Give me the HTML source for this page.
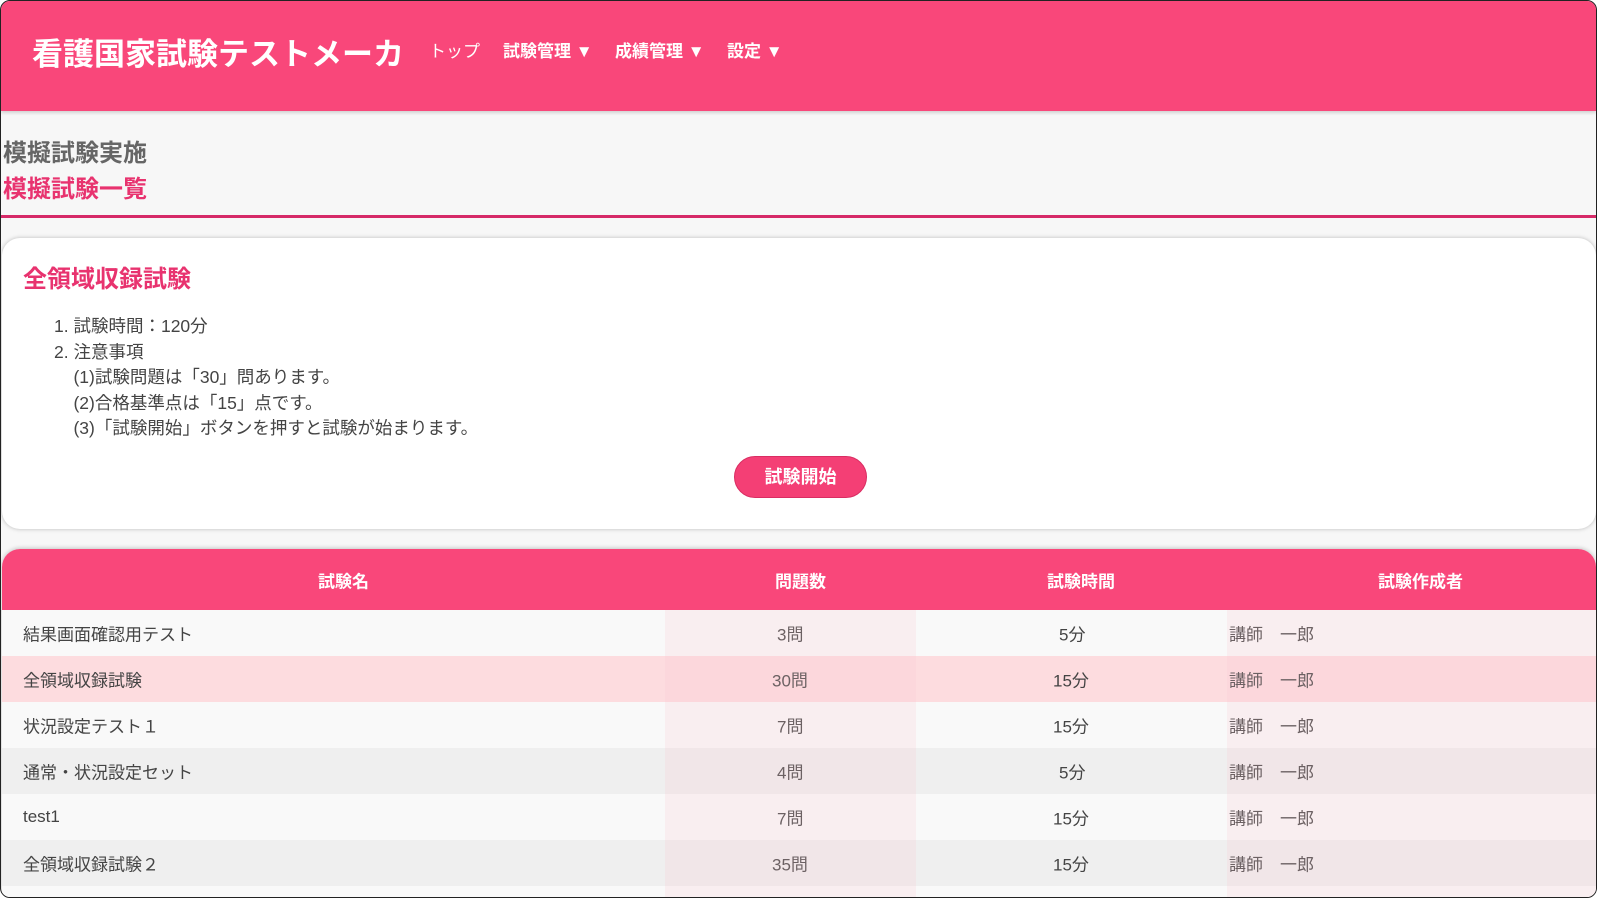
<!DOCTYPE html>
<html><head><meta charset="utf-8"><style>
*{margin:0;padding:0;box-sizing:border-box}
body{width:1598px;height:898px;background:#fff;font-family:"Liberation Sans","Noto Sans CJK JP",sans-serif;overflow:hidden;position:relative}
.frame{position:absolute;left:0;top:0;width:1597px;height:898px;border:1.5px solid #222;border-radius:10px;overflow:hidden;background:#f7f7f7}
.hdr{position:absolute;left:0;top:0;width:100%;height:110px;background:#f9477a;box-shadow:0 2px 3px rgba(0,0,0,.15)}
.logo{position:absolute;left:31px;top:28px;font-size:31px;font-weight:bold;color:#fff}
.nav{position:absolute;top:36px;font-size:17px;color:#fff;font-weight:bold}
.h1{position:absolute;left:2px;top:132px;font-size:24px;font-weight:bold;color:#666}
.h2{position:absolute;left:2px;top:168px;font-size:24px;font-weight:bold;color:#e8336f}
.line{position:absolute;left:0;top:214px;width:100%;height:3px;background:#d62a68}
.card{position:absolute;left:1px;top:237px;width:1594px;height:291px;background:#fff;border-radius:18px;box-shadow:0 0 4px rgba(0,0,0,.25)}
.ct{position:absolute;left:21px;top:21px;font-size:24px;font-weight:bold;color:#e8336f}
.list{position:absolute;left:52px;top:76px;font-size:17.5px;color:#444;line-height:25.5px}
.btn{position:absolute;left:732px;top:218px;width:133px;height:42px;border-radius:21px;background:#f43f75;color:#fff;font-size:18px;font-weight:bold;text-align:center;line-height:40px;border:1px solid #d92d62}
.tbl{position:absolute;left:1px;top:548px;width:1594px;height:360px;border-radius:18px 18px 0 0;overflow:hidden;box-shadow:0 -1px 4px rgba(0,0,0,.2)}
.th{height:61px;background:#f9477a;position:relative;color:#fff;font-weight:bold;font-size:17px}
.th span,.tr span{position:absolute;top:50%;transform:translateY(-50%)}
.tr{height:46px;position:relative;font-size:17px;color:#444}
.o{background:#f9f9f9}.e{background:#efefef}.hl{background:#fddcdf}
.tint{position:absolute;top:0;bottom:0;background:rgba(250,200,210,.22)}
</style></head><body>
<div class="frame">
<div class="hdr">
<div class="logo">看護国家試験テストメーカ</div>
<div class="nav" style="left:428px;font-weight:normal">トップ</div>
<div class="nav" style="left:502px">試験管理 ▼</div>
<div class="nav" style="left:614px">成績管理 ▼</div>
<div class="nav" style="left:726px">設定 ▼</div>
</div>
<div class="h1">模擬試験実施</div>
<div class="h2">模擬試験一覧</div>
<div class="line"></div>
<div class="card">
<div class="ct">全領域収録試験</div>
<div class="list">1. 試験時間：120分<br>2. 注意事項<br>&nbsp;&nbsp;&nbsp;&nbsp;(1)試験問題は「30」問あります。<br>&nbsp;&nbsp;&nbsp;&nbsp;(2)合格基準点は「15」点です。<br>&nbsp;&nbsp;&nbsp;&nbsp;(3)「試験開始」ボタンを押すと試験が始まります。</div>
<div class="btn">試験開始</div>
</div>
<div class="tbl">
<div class="th"><span style="left:316px">試験名</span><span style="left:773px">問題数</span><span style="left:1045px">試験時間</span><span style="left:1376px">試験作成者</span></div>
<div style="position:relative">
<div class="tr o"><span style="left:21px">結果画面確認用テスト</span><span style="left:775px">3問</span><span style="left:1057px">5分</span><span style="left:1227px">講師　一郎</span></div>
<div class="tr hl"><span style="left:21px">全領域収録試験</span><span style="left:770px">30問</span><span style="left:1051px">15分</span><span style="left:1227px">講師　一郎</span></div>
<div class="tr o"><span style="left:21px">状況設定テスト１</span><span style="left:775px">7問</span><span style="left:1051px">15分</span><span style="left:1227px">講師　一郎</span></div>
<div class="tr e"><span style="left:21px">通常・状況設定セット</span><span style="left:775px">4問</span><span style="left:1057px">5分</span><span style="left:1227px">講師　一郎</span></div>
<div class="tr o"><span style="left:21px">test1</span><span style="left:775px">7問</span><span style="left:1051px">15分</span><span style="left:1227px">講師　一郎</span></div>
<div class="tr e"><span style="left:21px">全領域収録試験２</span><span style="left:770px">35問</span><span style="left:1051px">15分</span><span style="left:1227px">講師　一郎</span></div>
<div class="tr o"></div>
<div class="tint" style="left:663px;width:251px"></div>
<div class="tint" style="left:1225px;width:370px"></div>
</div>
</div>
</div>
</body></html>
